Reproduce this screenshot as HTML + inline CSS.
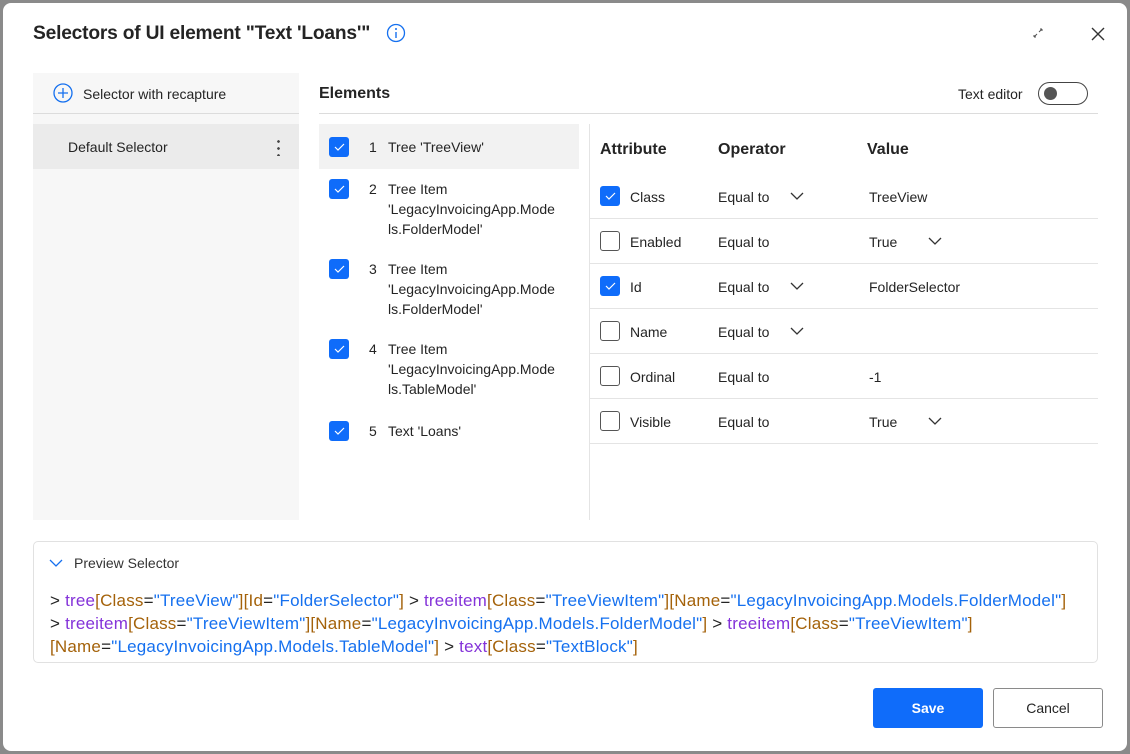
<!DOCTYPE html>
<html><head><meta charset="utf-8"><style>
*{box-sizing:border-box;margin:0;padding:0}
body{width:1130px;height:754px;background:#8a8a8a;font-family:"Liberation Sans",sans-serif;color:#242424;font-size:14px;position:relative;overflow:hidden}
.dlg{position:absolute;left:3px;top:3px;width:1124px;height:748px;background:#fff;border-radius:8px}
.a{position:absolute;white-space:nowrap}
.cb{position:absolute;width:20px;height:20px;border-radius:3px;background:#0f6cfa}
.cb svg{position:absolute;left:3px;top:4px}
.ub{position:absolute;width:20px;height:20px;border-radius:3px;border:1px solid #555;background:#fff}
.hl{position:absolute;height:1px;background:#e4e4e4}
.chev{position:absolute}
.p{color:#8433d9}.o{color:#a4620a}.b{color:#1570ef}
</style></head><body>
<div class="dlg"></div>
<div class="a" style="left:33px;top:23px;font-size:19.2px;font-weight:bold;color:#242424;letter-spacing:-0.2px">Selectors of UI element "Text 'Loans'"</div>
<svg class="a" style="left:386px;top:23px" width="20" height="20" viewBox="0 0 20 20"><circle cx="10" cy="10" r="8.5" fill="none" stroke="#1570ef" stroke-width="1.3"/><circle cx="10" cy="6" r="1" fill="#1570ef"/><path d="M10 9v6" stroke="#1570ef" stroke-width="1.4"/></svg>
<svg class="a" style="left:1031px;top:26px" width="14" height="14" viewBox="0 0 14 14"><path d="M3 11l3-3M11 3L8 6M3 11h2M3 11V9M11 3H9M11 3v2" stroke="#555" stroke-width="1"/></svg>
<svg class="a" style="left:1090px;top:26px" width="16" height="16" viewBox="0 0 16 16"><path d="M2 2l12 12M14 2L2 14" stroke="#333" stroke-width="1.4"/></svg>

<div class="a" style="left:33px;top:73px;width:266px;height:447px;background:#f7f7f7"></div>
<div class="hl" style="left:33px;top:113px;width:266px;background:#dcdcdc"></div>
<svg class="a" style="left:53px;top:83px" width="20" height="20" viewBox="0 0 20 20"><circle cx="10" cy="10" r="9" fill="none" stroke="#1570ef" stroke-width="1.3"/><path d="M10 5v10M5 10h10" stroke="#1570ef" stroke-width="1.3"/></svg>
<div class="a" style="left:83px;top:86px">Selector with recapture</div>
<div class="a" style="left:33px;top:124px;width:266px;height:45px;background:#ebebeb"></div>
<div class="a" style="left:68px;top:139px">Default Selector</div>
<div class="a" style="left:277px;top:138px;width:3px;height:18px;background:radial-gradient(circle,#444 1.2px,transparent 1.5px) 0 0/3px 7px repeat-y"></div>

<div class="a" style="left:319px;top:85px;font-size:16px;font-weight:bold">Elements</div>
<div class="a" style="left:958px;top:86px">Text editor</div>
<div class="a" style="left:1038px;top:82px;width:50px;height:23px;border:1px solid #444;border-radius:12px"><div style="position:absolute;left:5px;top:4px;width:13px;height:13px;border-radius:50%;background:#555"></div></div>
<div class="hl" style="left:319px;top:113px;width:779px;background:#dcdcdc"></div>

<div class="a" style="left:319px;top:124px;width:260px;height:45px;background:#f2f2f2"></div>
<div class="cb" style="left:329px;top:137px"><svg width="14" height="12"><path d="M3 6l3 3 6-6" stroke="#fff" fill="none" stroke-width="1.2"/></svg></div>
<div class="a" style="left:369px;top:139px">1</div><div class="a" style="left:388px;top:139px">Tree 'TreeView'</div>
<div class="cb" style="left:329px;top:179px"><svg width="14" height="12"><path d="M3 6l3 3 6-6" stroke="#fff" fill="none" stroke-width="1.2"/></svg></div>
<div class="a" style="left:369px;top:179px;line-height:20px">2</div><div class="a" style="left:388px;top:179px;line-height:20px">Tree Item<br>'LegacyInvoicingApp.Mode<br>ls.FolderModel'</div>
<div class="cb" style="left:329px;top:259px"><svg width="14" height="12"><path d="M3 6l3 3 6-6" stroke="#fff" fill="none" stroke-width="1.2"/></svg></div>
<div class="a" style="left:369px;top:259px;line-height:20px">3</div><div class="a" style="left:388px;top:259px;line-height:20px">Tree Item<br>'LegacyInvoicingApp.Mode<br>ls.FolderModel'</div>
<div class="cb" style="left:329px;top:339px"><svg width="14" height="12"><path d="M3 6l3 3 6-6" stroke="#fff" fill="none" stroke-width="1.2"/></svg></div>
<div class="a" style="left:369px;top:339px;line-height:20px">4</div><div class="a" style="left:388px;top:339px;line-height:20px">Tree Item<br>'LegacyInvoicingApp.Mode<br>ls.TableModel'</div>
<div class="cb" style="left:329px;top:421px"><svg width="14" height="12"><path d="M3 6l3 3 6-6" stroke="#fff" fill="none" stroke-width="1.2"/></svg></div>
<div class="a" style="left:369px;top:423px">5</div><div class="a" style="left:388px;top:423px">Text 'Loans'</div>

<div class="a" style="left:589px;top:124px;width:1px;height:396px;background:#e4e4e4"></div>
<div class="a" style="left:600px;top:141px;font-size:16px;font-weight:bold">Attribute</div>
<div class="a" style="left:718px;top:141px;font-size:16px;font-weight:bold">Operator</div>
<div class="a" style="left:867px;top:141px;font-size:16px;font-weight:bold">Value</div>

<div class="cb" style="left:600px;top:186px"><svg width="14" height="12"><path d="M3 6l3 3 6-6" stroke="#fff" fill="none" stroke-width="1.2"/></svg></div>
<div class="a" style="left:630px;top:189px">Class</div><div class="a" style="left:718px;top:189px">Equal to</div>
<svg class="chev" style="left:790px;top:191px" width="14" height="10"><path d="M1 2l6 6 6-6" stroke="#333" fill="none" stroke-width="1.3"/></svg>
<div class="a" style="left:869px;top:189px">TreeView</div>
<div class="hl" style="left:590px;top:218px;width:508px"></div>

<div class="ub" style="left:600px;top:231px"></div>
<div class="a" style="left:630px;top:234px">Enabled</div><div class="a" style="left:718px;top:234px">Equal to</div>
<div class="a" style="left:869px;top:234px">True</div>
<svg class="chev" style="left:928px;top:236px" width="14" height="10"><path d="M1 2l6 6 6-6" stroke="#333" fill="none" stroke-width="1.3"/></svg>
<div class="hl" style="left:590px;top:263px;width:508px"></div>

<div class="cb" style="left:600px;top:276px"><svg width="14" height="12"><path d="M3 6l3 3 6-6" stroke="#fff" fill="none" stroke-width="1.2"/></svg></div>
<div class="a" style="left:630px;top:279px">Id</div><div class="a" style="left:718px;top:279px">Equal to</div>
<svg class="chev" style="left:790px;top:281px" width="14" height="10"><path d="M1 2l6 6 6-6" stroke="#333" fill="none" stroke-width="1.3"/></svg>
<div class="a" style="left:869px;top:279px">FolderSelector</div>
<div class="hl" style="left:590px;top:308px;width:508px"></div>

<div class="ub" style="left:600px;top:321px"></div>
<div class="a" style="left:630px;top:324px">Name</div><div class="a" style="left:718px;top:324px">Equal to</div>
<svg class="chev" style="left:790px;top:326px" width="14" height="10"><path d="M1 2l6 6 6-6" stroke="#333" fill="none" stroke-width="1.3"/></svg>
<div class="hl" style="left:590px;top:353px;width:508px"></div>

<div class="ub" style="left:600px;top:366px"></div>
<div class="a" style="left:630px;top:369px">Ordinal</div><div class="a" style="left:718px;top:369px">Equal to</div>
<div class="a" style="left:869px;top:369px">-1</div>
<div class="hl" style="left:590px;top:398px;width:508px"></div>

<div class="ub" style="left:600px;top:411px"></div>
<div class="a" style="left:630px;top:414px">Visible</div><div class="a" style="left:718px;top:414px">Equal to</div>
<div class="a" style="left:869px;top:414px">True</div>
<svg class="chev" style="left:928px;top:416px" width="14" height="10"><path d="M1 2l6 6 6-6" stroke="#333" fill="none" stroke-width="1.3"/></svg>
<div class="hl" style="left:590px;top:443px;width:508px"></div>

<div class="a" style="left:33px;top:541px;width:1065px;height:122px;border:1px solid #e1e1e1;border-radius:5px"></div>
<svg class="chev" style="left:49px;top:558px" width="14" height="10"><path d="M1 2l6 6 6-6" stroke="#1570ef" fill="none" stroke-width="1.3"/></svg>
<div class="a" style="left:74px;top:555px;color:#333">Preview Selector</div>
<div class="a" style="left:50px;top:589px;font-size:17px;line-height:23px;letter-spacing:0.2px">&gt; <span class="p">tree</span><span class="o">[Class</span>=<span class="b">"TreeView"</span><span class="o">][Id</span>=<span class="b">"FolderSelector"</span><span class="o">]</span> &gt; <span class="p">treeitem</span><span class="o">[Class</span>=<span class="b">"TreeViewItem"</span><span class="o">][Name</span>=<span class="b">"LegacyInvoicingApp.Models.FolderModel"</span><span class="o">]</span><br>&gt; <span class="p">treeitem</span><span class="o">[Class</span>=<span class="b">"TreeViewItem"</span><span class="o">][Name</span>=<span class="b">"LegacyInvoicingApp.Models.FolderModel"</span><span class="o">]</span> &gt; <span class="p">treeitem</span><span class="o">[Class</span>=<span class="b">"TreeViewItem"</span><span class="o">]</span><br><span class="o">[Name</span>=<span class="b">"LegacyInvoicingApp.Models.TableModel"</span><span class="o">]</span> &gt; <span class="p">text</span><span class="o">[Class</span>=<span class="b">"TextBlock"</span><span class="o">]</span></div>

<div class="a" style="left:873px;top:688px;width:110px;height:40px;background:#0f6cfa;border-radius:3px;color:#fff;font-weight:bold;text-align:center;line-height:40px">Save</div>
<div class="a" style="left:993px;top:688px;width:110px;height:40px;border:1px solid #8a8a8a;border-radius:3px;text-align:center;line-height:38px">Cancel</div>
</body></html>
